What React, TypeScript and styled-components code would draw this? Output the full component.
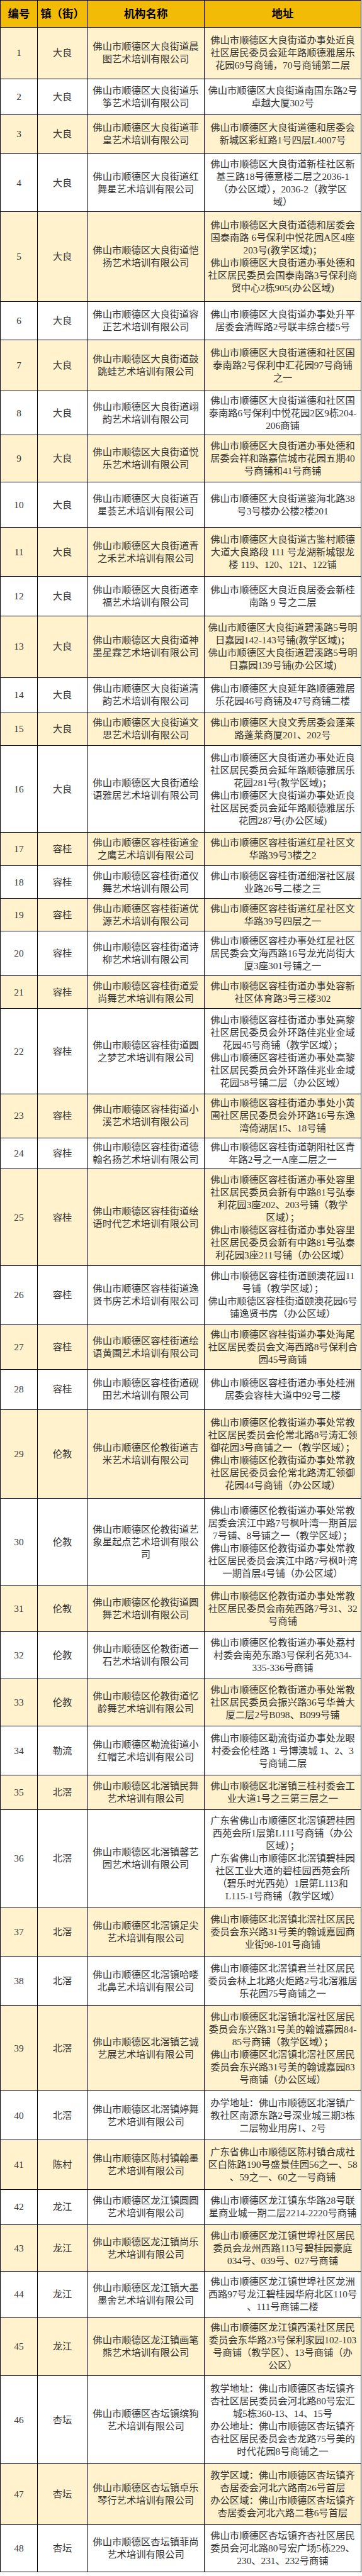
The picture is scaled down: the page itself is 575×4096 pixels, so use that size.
import React from "react";
import styled, { createGlobalStyle } from "styled-components";

const SCALE = 0.81;

const GlobalStyle = createGlobalStyle`
	html, body {
		margin: 0;
		padding: 0;
		background: #fff;
	}
`;

const Sheet = styled.div`
	width: 574px;
	box-sizing: border-box;
	border-top: 1px solid #000;
	border-left: 1px solid #000;
	font-family: "Liberation Serif", "Noto Sans CJK SC", serif;
	color: #333;
`;

const Line = styled.div<{ $h: number; $bg: string }>`
	display: grid;
	grid-template-columns: 59px 79px 186px 249px;
	height: ${(p) => p.$h * SCALE}px;
	background: ${(p) => p.$bg};
`;

const Cell = styled.div<{ $head?: boolean }>`
	box-sizing: border-box;
	display: flex;
	align-items: center;
	justify-content: center;
	border-right: 1px solid #000;
	border-bottom: 1px solid #000;
	padding: 0 1px;
	text-align: center;
	white-space: pre;
	font-size: ${(p) => (p.$head ? "17.4px" : "15.3px")};
	font-weight: ${(p) => (p.$head ? 700 : 400)};
	color: ${(p) => (p.$head ? "#000" : "#333")};
	line-height: 20px;
`;

type Org = { t: string; n: string; a: string; h: number };

// 每行: 镇街, 机构名称, 地址, 原图行高
const rows: Org[] = [
	{ t: "大良", h: 100.7, n: "佛山市顺德区大良街道晨\n图艺术培训有限公司", a: "佛山市顺德区大良街道办事处近良\n社区居民委员会延年路顺德雅居乐\n花园69号商铺，70号商铺第二层" },
	{ t: "大良", h: 70.3, n: "佛山市顺德区大良街道乐\n筝艺术培训有限公司", a: "佛山市顺德区大良街道南国东路2号\n卓越大厦302号" },
	{ t: "大良", h: 77, n: "佛山市顺德区大良街道菲\n皇艺术培训有限公司", a: "佛山市顺德区大良街道德和居委会\n新城区彩虹路1号四层L4007号" },
	{ t: "大良", h: 113.7, n: "佛山市顺德区大良街道红\n舞星艺术培训有限公司", a: "佛山市顺德区大良街道新桂社区新\n基三路18号德意楼二层之2036-1\n（办公区域），2036-2（教学区\n域）" },
	{ t: "大良", h: 176.3, n: "佛山市顺德区大良街道恺\n扬艺术培训有限公司", a: "佛山市顺德区大良街道德和居委会\n国泰南路 6号保利中悦花园A区4座\n203号(教学区域)；\n佛山市顺德区大良街道办事处德和\n社区居民委员会国泰南路3号保利商\n贸中心2栋905(办公区域)" },
	{ t: "大良", h: 76, n: "佛山市顺德区大良街道容\n正艺术培训有限公司", a: "佛山市顺德区大良街道办事处升平\n居委会清晖路2号联丰综合楼5号" },
	{ t: "大良", h: 100, n: "佛山市顺德区大良街道鼓\n跳蛙艺术培训有限公司", a: "佛山市顺德区大良街道德和社区国\n泰南路2号保利中汇花园97号商铺\n之一" },
	{ t: "大良", h: 86, n: "佛山市顺德区大良街道翊\n韵艺术培训有限公司", a: "佛山市顺德区大良街道德和社区国\n泰南路6号保利中悦花园2区9栋204-\n206商铺" },
	{ t: "大良", h: 93, n: "佛山市顺德区大良街道悦\n乐艺术培训有限公司", a: "佛山市顺德区大良街道办事处德和\n居委会祥和路嘉信城市花园五期40\n号商铺和41号商铺" },
	{ t: "大良", h: 88.7, n: "佛山市顺德区大良街道百\n星荟艺术培训有限公司", a: "佛山市顺德区大良街道鉴海北路38\n号3号楼办公楼2楼201" },
	{ t: "大良", h: 96.3, n: "佛山市顺德区大良街道青\n之禾艺术培训有限公司", a: "佛山市顺德区大良街道古鉴村顺德\n大道大良路段 111 号龙湖新城银龙\n楼 119、120、121、122铺" },
	{ t: "大良", h: 77, n: "佛山市顺德区大良街道幸\n福艺术培训有限公司", a: "佛山市顺德区大良近良居委会新桂\n南路 9 号之二层" },
	{ t: "大良", h: 121, n: "佛山市顺德区大良街道神\n墨星霖艺术培训有限公司", a: "佛山市顺德区大良街道碧溪路5号明\n日嘉园142-143号铺(教学区域)；\n佛山市顺德区大良街道碧溪路5号明\n日嘉园139号铺(办公区域)" },
	{ t: "大良", h: 69, n: "佛山市顺德区大良街道清\n韵艺术培训有限公司", a: "佛山市顺德区大良延年路顺德雅居\n乐花园46号商铺及47号商铺二楼" },
	{ t: "大良", h: 65, n: "佛山市顺德区大良街道文\n思艺术培训有限公司", a: "佛山市顺德区大良文秀居委会蓬莱\n路蓬莱商厦201、202号" },
	{ t: "大良", h: 170, n: "佛山市顺德区大良街道绘\n语雅居艺术培训有限公司", a: "佛山市顺德区大良街道办事处近良\n社区居民委员会延年路顺德雅居乐\n花园281号(教学区域)；\n佛山市顺德区大良街道办事处近良\n社区居民委员会延年路顺德雅居乐\n花园287号(办公区域)" },
	{ t: "容桂", h: 65.7, n: "佛山市顺德区容桂街道金\n之鹰艺术培训有限公司", a: "佛山市顺德区容桂街道红星社区文\n华路39号3楼之2" },
	{ t: "容桂", h: 64.3, n: "佛山市顺德区容桂街道仪\n舞艺术培训有限公司", a: "佛山市顺德区容桂街道细滘社区展\n业路26号二楼之三" },
	{ t: "容桂", h: 64, n: "佛山市顺德区容桂街道优\n源艺术培训有限公司", a: "佛山市顺德区容桂街道红星社区文\n华路39号四层之一" },
	{ t: "容桂", h: 88, n: "佛山市顺德区容桂街道诗\n柳艺术培训有限公司", a: "佛山市顺德区容桂办事处红星社区\n居民委会文海西路16号龙光尚街大\n厦3座301号铺之一" },
	{ t: "容桂", h: 64, n: "佛山市顺德区容桂街道爱\n尚舞艺术培训有限公司", a: "佛山市顺德区容桂街道办事处容新\n社区体育路3号三楼302" },
	{ t: "容桂", h: 168, n: "佛山市顺德区容桂街道圆\n之梦艺术培训有限公司", a: "佛山市顺德区容桂街道办事处高黎\n社区居民委员会外环路佳兆业金域\n花园45号商铺（教学区域）；\n佛山市顺德区容桂街道办事处高黎\n社区居民委员会外环路佳兆业金域\n花园58号铺二层（办公区域）" },
	{ t: "容桂", h: 86, n: "佛山市顺德区容桂街道小\n溪艺术培训有限公司", a: "佛山市顺德区容桂街道办事处小黄\n圃社区居民委员会外环路16号东逸\n湾倚湖居15、18号铺" },
	{ t: "容桂", h: 61, n: "佛山市顺德区容桂街道德\n翰名扬艺术培训有限公司", a: "佛山市顺德区容桂街道朝阳社区青\n年路2号之一A座二层之一" },
	{ t: "容桂", h: 189.7, n: "佛山市顺德区容桂街道绘\n语时代艺术培训有限公司", a: "佛山市顺德区容桂街道办事处容里\n社区居民委员会新有中路81号弘泰\n利花园3座202、203号铺（教学\n区域）；\n佛山市顺德区容桂街道办事处容里\n社区居民委员会新有中路81号弘泰\n利花园3座211号铺（办公区域）" },
	{ t: "容桂", h: 116, n: "佛山市顺德区容桂街道逸\n贤书房艺术培训有限公司", a: "佛山市顺德区容桂街道颐澳花园11\n号铺（教学区域）；\n佛山市顺德区容桂街道颐澳花园6号\n铺逸贤书房（办公区域）" },
	{ t: "容桂", h: 88.3, n: "佛山市顺德区容桂街道绘\n语黄圃艺术培训有限公司", a: "佛山市顺德区容桂街道办事处海尾\n社区居民委员会文海西路8号保利合\n园45号商铺" },
	{ t: "容桂", h: 78, n: "佛山市顺德区容桂街道砚\n田艺术培训有限公司", a: "佛山市顺德区容桂街道办事处桂洲\n居委会容桂大道中92号二楼" },
	{ t: "伦教", h: 174.4, n: "佛山市顺德区伦教街道吉\n米艺术培训有限公司", a: "佛山市顺德区伦教街道办事处常教\n社区居民委员会伦常北路8号涛汇领\n御花园3号商铺之一（教学区域）；\n佛山市顺德区伦教街道办事处常教\n社区居民委员会伦常北路涛汇领御\n花园44号商铺（办公区域）" },
	{ t: "伦教", h: 171.6, n: "佛山市顺德区伦教街道艺\n象星起点艺术培训有限公\n司", a: "佛山市顺德区伦教街道办事处常教\n居委会滨江中路7号枫叶湾一期首层\n7号铺、8号铺之一（教学区域）；\n佛山市顺德区伦教街道办事处常教\n社区居民委员会滨江中路7号枫叶湾\n一期首层4号铺（办公区域）" },
	{ t: "伦教", h: 90, n: "佛山市顺德区伦教街道圆\n舞艺术培训有限公司", a: "佛山市顺德区伦教街道办事处常教\n社区居民委员会南苑西路7号31、32\n号商铺" },
	{ t: "伦教", h: 92.7, n: "佛山市顺德区伦教街道一\n石艺术培训有限公司", a: "佛山市顺德区伦教街道办事处荔村\n村委会南苑东路3号保利名苑334-\n335-336号商铺" },
	{ t: "伦教", h: 93.3, n: "佛山市顺德区伦教街道忆\n龄舞艺术培训有限公司", a: "佛山市顺德区伦教街道办事处常教\n社区居民委员会振兴路36号华普大\n厦二层2号B098、B099号铺" },
	{ t: "勒流", h: 96, n: "佛山市顺德区勒流街道小\n红帽艺术培训有限公司", a: "佛山市顺德区勒流街道办事处龙眼\n村委会伦桂路 1 号博澳城 1、2、3\n号商铺二层" },
	{ t: "北滘", h: 68, n: "佛山市顺德区北滘镇民舞\n艺术培训有限公司", a: "佛山市顺德区北滘镇三桂村委会工\n业大道1号之三第三层之一" },
	{ t: "北滘", h: 191.7, n: "佛山市顺德区北滘镇馨艺\n园艺术培训有限公司", a: "广东省佛山市顺德区北滘镇碧桂园\n西苑会所1层第L111号商铺（办公\n区域）；\n广东省佛山市顺德区北滘镇碧桂园\n社区工业大道的碧桂园西苑会所\n（碧乐时光西苑）1层第L113和\nL115-1号商铺（教学区域）" },
	{ t: "北滘", h: 96, n: "佛山市顺德区北滘镇足尖\n艺术培训有限公司", a: "佛山市顺德区北滘镇北滘社区居民\n委员会东兴路31号美的翰诚嘉园商\n业街98-101号商铺" },
	{ t: "北滘", h: 96.3, n: "佛山市顺德区北滘镇哈喽\n北鼻艺术培训有限公司", a: "佛山市顺德区北滘镇君兰社区居民\n委员会林上北路火炬路2号北滘雅居\n乐花园75号商铺之一" },
	{ t: "北滘", h: 167.7, n: "佛山市顺德区北滘镇艺诚\n艺展艺术培训有限公司", a: "佛山市顺德区北滘镇北滘社区居民\n委员会东兴路31号美的翰诚嘉园84-\n85号商铺（教学区域）；\n佛山市顺德区北滘镇北滘社区居民\n委员会东兴路31号美的翰诚嘉园83\n号商铺（办公区域）" },
	{ t: "北滘", h: 96.5, n: "佛山市顺德区北滘镇婷舞\n艺术培训有限公司", a: "办学地址：佛山市顺德区北滘镇广\n教社区南源东路2号深业城三期3栋\n二层物业用房1、2号" },
	{ t: "陈村", h: 96.8, n: "佛山市顺德区陈村镇翰墨\n艺术培训有限公司", a: "广东省佛山市顺德区陈村镇合成社\n区白陈路190号盛景佳园56之一、58\n、59之一、60之一号商铺" },
	{ t: "龙江", h: 70, n: "佛山市顺德区龙江镇圆圆\n艺术培训有限公司", a: "佛山市顺德区龙江镇东华路28号联\n星商业城一期二层2214-2220号商铺" },
	{ t: "龙江", h: 91.7, n: "佛山市顺德区龙江镇尚乐\n艺术培训有限公司", a: "佛山市顺德区龙江镇世埠社区居民\n委员会龙州西路113号碧桂园豪庭\n034号、039号、027号商铺" },
	{ t: "龙江", h: 89.3, n: "佛山市顺德区龙江镇大墨\n墨舍艺术培训有限公司", a: "佛山市顺德区龙江镇世埠社区龙洲\n西路97号龙江碧桂园华府北区110号\n、111号商铺二楼" },
	{ t: "龙江", h: 115.7, n: "佛山市顺德区龙江镇画笔\n熊艺术培训有限公司", a: "佛山市顺德区龙江镇西溪社区居民\n委员会东华路23号保利家园102-103\n号商铺（教学区）、13号商铺（办\n公区）" },
	{ t: "杏坛", h: 172.3, n: "佛山市顺德区杏坛镇缤狗\n艺术培训有限公司", a: "教学地址：佛山市顺德区杏坛镇齐\n杏社区居民委员会河北路80号宏汇\n城5栋360-13、14、15号\n办公地址：佛山市顺德区杏坛镇齐\n杏社区居民委员会杏龙路75号美的\n时代花园8号商铺之一" },
	{ t: "杏坛", h: 119.4, n: "佛山市顺德区杏坛镇卓乐\n琴行艺术培训有限公司", a: "教学区域：佛山市顺德区杏坛镇齐\n杏居委会河北六路南26号首层\n办公区域：佛山市顺德区杏坛镇齐\n杏居委会河北六路二巷6号首层" },
	{ t: "杏坛", h: 93.3, n: "佛山市顺德区杏坛镇菲尚\n艺术培训有限公司", a: "佛山市顺德区杏坛镇齐杏社区居民\n委员会河北路80号宏广场5栋229、\n230、231、232号商铺" },
];

const App: React.FC = () => {
	return (
		<>
			<GlobalStyle />
			<Sheet>
				<Line $h={53.3} $bg="#f2bb05">
					<Cell $head>编号</Cell>
					<Cell $head>镇（街）</Cell>
					<Cell $head>机构名称</Cell>
					<Cell $head>地址</Cell>
				</Line>
				{rows.map((r, i) => (
					<Line key={i} $h={r.h} $bg={i % 2 === 0 ? "#fff2cc" : "#fff"}>
						<Cell>{i + 1}</Cell>
						<Cell>{r.t}</Cell>
						<Cell>{r.n}</Cell>
						<Cell>{r.a}</Cell>
					</Line>
				))}
			</Sheet>
		</>
	);
};

export default App;
